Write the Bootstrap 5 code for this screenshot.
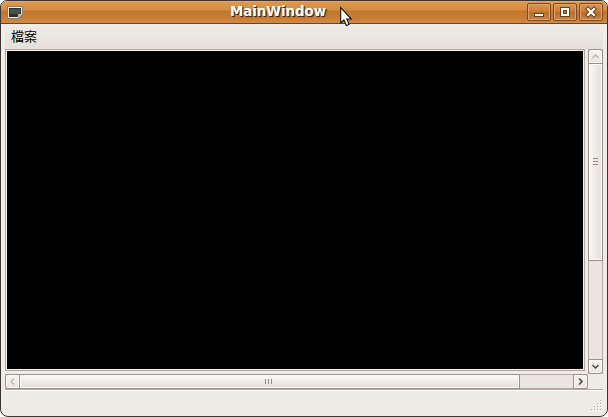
<!DOCTYPE html>
<html lang="zh-Hant">
<head>
<meta charset="utf-8">
<title>MainWindow</title>
<link href="https://cdn.jsdelivr.net/npm/bootstrap@5.3.0/dist/css/bootstrap.min.css" rel="stylesheet">
<style>
body{width:608px;height:417px;overflow:hidden;background:#fff}
svg{display:block;flex:none}
.win{width:608px;height:417px;border:1px solid #3b3530;border-radius:7px 7px 8px 8px;background:#efebe7;overflow:hidden}
.titlebar{height:23px;flex:none;border-bottom:1px solid #6b4526;background:linear-gradient(#f0b57a 0,#dd984f 1px,#d48d45 9px,#c0762e 10px,#c67d36 17px,#d38b43 22px);padding:0 4px 0 6px}
.caption{font:bold 13.33px/21px "DejaVu Sans",sans-serif;color:#fff;text-shadow:1px 1px 1px #3b2817,1px 1px 0 #5b4028;height:22px;margin-right:auto;margin-left:207px}
.winbtn{width:24px;height:18px;border:1px solid #794c25;border-radius:2px;background:linear-gradient(#d99650,#ca8139 45%,#b66e2c 50%,#c98342);box-shadow:inset 0 0 0 1px #e0a368}
.menus{height:25px;flex:none;margin:0 4px;background:linear-gradient(#f0ede9,#e4dfd9)}
.menuitem{font:13px/24px "Noto Sans CJK TC",sans-serif;color:#000;padding-left:6px}
.work{height:325px;flex:none;padding:0 4px}
.canvas{width:580px;height:322px;border:1px solid #b0a79f;background:#000;box-shadow:inset 0 0 0 1px #f7f0ea}
.vbar{width:15px;height:325px;background:#ebe5e1;border-left:1px solid #b8aaa0;border-right:1px solid #b8aaa0}
.hbar{width:583px;height:15px;flex:none;margin-left:4px;background:#ebe5e1;border-top:1px solid #b8aaa0;border-bottom:1px solid #b8aaa0}
.step,.thumb{border:1px solid #9a918a;box-shadow:inset 0 0 0 1px #fbfaf8;flex:none}
.step{background:linear-gradient(#f7f5f3,#e8e3df);width:15px;height:15px}
.vbar .step{margin:0 -1px}
.hbar .step{margin:-1px 0}
.vbar .thumb{width:15px;height:198px;margin:-1px -1px 0;padding-bottom:2px;background:linear-gradient(90deg,#faf8f6,#e3deda)}
.hbar .thumb{height:15px;width:501px;margin:-1px 0 0 -1px;padding-right:2px;background:linear-gradient(#faf8f6,#e3deda)}
.up{border-radius:3px 3px 0 0}.down{border-radius:0 0 3px 3px}.left{border-radius:3px 0 0 3px}.right{border-radius:0 3px 3px 0}
.status{margin:0 4px;border-top:1px solid #b5aaa1;box-shadow:inset 0 1px #fff;padding:0 1px 5px 0}
.pointer{left:339px;top:5px}
</style>
<script src="https://cdn.jsdelivr.net/npm/bootstrap@5.3.0/dist/js/bootstrap.bundle.min.js"></script>
</head>
<body>
<div class="win d-flex flex-column position-relative">
  <header class="titlebar d-flex align-items-center">
    <svg width="16" height="22" shape-rendering="crispEdges"><path d="M0 5h16v9l-4 4H0z" fill="#858071"/><path d="M1 6h14v7l-4 4H1z" fill="#ecebe6"/><path d="M2 7h12v6l-3 3H2z" fill="#30332f"/><path d="M3 8h10v4l-3 1H3z" fill="#4b514a"/><path d="M11 17v-4h4z" fill="#b9bab1"/></svg>
    <div class="caption">MainWindow</div>
    <div class="d-flex" style="gap:2px">
      <div class="winbtn"><svg width="22" height="16"><path d="M6 9h10v4H6z" fill="#704119"/><path d="M7 10h8v2H7z" fill="#fff"/></svg></div>
      <div class="winbtn"><svg width="22" height="16" shape-rendering="crispEdges"><path d="M6 3h10v10H6z" fill="#704119"/><path d="M7 4h8v8H7z" fill="#fff"/><path d="M9 6h4v4H9z" fill="#704119"/><path d="M10 7h2v2h-2z" fill="#bd7936"/></svg></div>
      <div class="winbtn"><svg width="22" height="16"><path d="M8 5l6 6m0-6l-6 6" stroke="#704119" stroke-width="4.2" stroke-linecap="square"/><path d="M8 5l6 6m0-6l-6 6" stroke="#fff" stroke-width="2.2" stroke-linecap="square"/></svg></div>
    </div>
  </header>
  <nav class="menus"><div class="menuitem">檔案</div></nav>
  <main class="work d-flex justify-content-between">
    <div class="canvas"></div>
    <div class="vbar d-flex flex-column">
      <div class="step up"><svg width="13" height="13" fill="none" stroke="#bdb6ae" stroke-width="1.4"><path d="M3.5 8l3-3 3 3"/></svg></div>
      <div class="thumb d-flex align-items-center justify-content-center"><svg width="5" height="7" fill="#938b84"><path d="M0 0h5v1H0zM0 3h5v1H0zM0 6h5v1H0z"/></svg></div>
      <div class="step down mt-auto"><svg width="13" height="13" fill="none" stroke="#494641" stroke-width="1.5"><path d="M3.5 5l3 3 3-3"/></svg></div>
    </div>
  </main>
  <div class="hbar d-flex">
    <div class="step left"><svg width="13" height="13" fill="none" stroke="#bdb6ae" stroke-width="1.4"><path d="M8 3.5l-3 3 3 3"/></svg></div>
    <div class="thumb d-flex align-items-center justify-content-center"><svg width="7" height="5" fill="#938b84"><path d="M0 0h1v5H0zM3 0h1v5H3zM6 0h1v5H6z"/></svg></div>
    <div class="step right ms-auto"><svg width="13" height="13" fill="none" stroke="#494641" stroke-width="1.5"><path d="M5 3.5l3 3-3 3"/></svg></div>
  </div>
  <footer class="status flex-grow-1 d-flex justify-content-end align-items-end">
    <svg width="11" height="11"><g fill="#fff"><path d="M10 1h1v1h-1zM7 4h1v1H7zM10 4h1v1h-1zM4 7h1v1H4zM7 7h1v1H7zM10 7h1v1h-1zM1 10h1v1H1zM4 10h1v1H4zM7 10h1v1H7zM10 10h1v1h-1z"/></g><g fill="#b5aaa1"><path d="M9 0h1v1H9zM6 3h1v1H6zM9 3h1v1H9zM3 6h1v1H3zM6 6h1v1H6zM9 6h1v1H9zM0 9h1v1H0zM3 9h1v1H3zM6 9h1v1H6zM9 9h1v1H9z"/></g></svg>
  </footer>
  <svg class="pointer position-absolute" width="14" height="21"><path d="M.7 1.7v15.2l3.2-2.9L6.4 19.5l2.7-1.1-2.3-5.4h4.5z" fill="#fff" stroke="#111" stroke-width="1.1"/></svg>
</div>
</body>
</html>
